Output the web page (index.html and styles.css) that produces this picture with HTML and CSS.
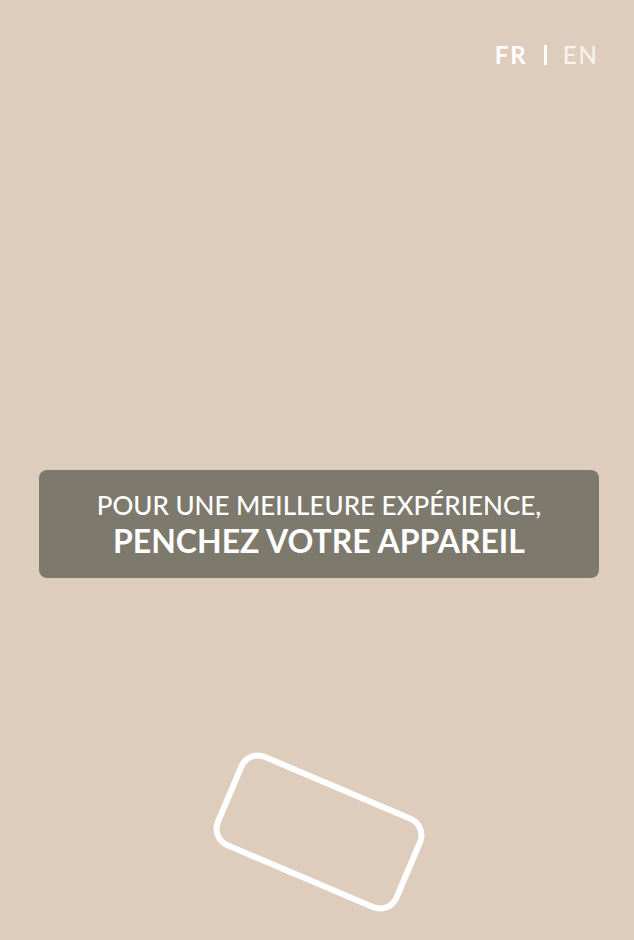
FILE: index.html
```html
<!DOCTYPE html>
<html lang="fr">
<head>
<meta charset="utf-8">
<meta name="viewport" content="width=device-width, initial-scale=1">
<title>Penchez votre appareil</title>
<link rel="stylesheet" href="styles.css">
</head>
<body>
<header class="top">
  <nav class="languages" aria-label="Langue">
    <a class="language language-current" href="#fr">FR</a>
    <span class="divider"></span>
    <a class="language" href="#en">EN</a>
  </nav>
</header>
<main class="message">
  <p class="intro">POUR UNE MEILLEURE EXPÉRIENCE,</p>
  <p class="action">PENCHEZ VOTRE APPAREIL</p>
</main>
<footer class="device">
  <svg class="phone" viewBox="0 0 220 168" aria-hidden="true">
    <rect x="13" y="36" width="194" height="96" rx="18" transform="rotate(23 110 84)" fill="none" stroke="#fff" stroke-width="6"/>
  </svg>
</footer>
</body>
</html>
```
FILE: styles.css
```css
* {
  box-sizing: border-box;
}

body {
  margin: 0;
  min-height: 100vh;
  display: grid;
  grid-template-rows: 50vh auto 1fr;
  background: #decdbd;
  color: #fff;
  font-family: Lato, "Open Sans", sans-serif;
}

.top {
  padding: 39px 35px 0;
}

.languages {
  display: flex;
  justify-content: flex-end;
  align-items: center;
  gap: 16px;
}

.language {
  color: #f8f2ed;
  font-size: 24px;
  font-weight: 500;
  line-height: 32px;
  letter-spacing: 2px;
  text-decoration: none;
}

.language-current {
  color: #fff;
  font-weight: 700;
}

.divider {
  width: 3px;
  height: 20px;
  background: #fff;
}

.message {
  margin: 0 35px 0 39px;
  padding: 17px 16px 19px;
  border-radius: 8px;
  background: #7d796c;
  text-align: center;
}

.intro,
.action {
  margin: 0;
  line-height: 36px;
}

.intro {
  font-size: 26px;
  font-weight: 500;
}

.action {
  font-size: 32px;
  font-weight: 700;
}

.device {
  display: flex;
  justify-content: center;
  align-items: flex-end;
  padding: 0 0 24px 4px;
}

.phone {
  width: 220px;
  height: 168px;
}
```
